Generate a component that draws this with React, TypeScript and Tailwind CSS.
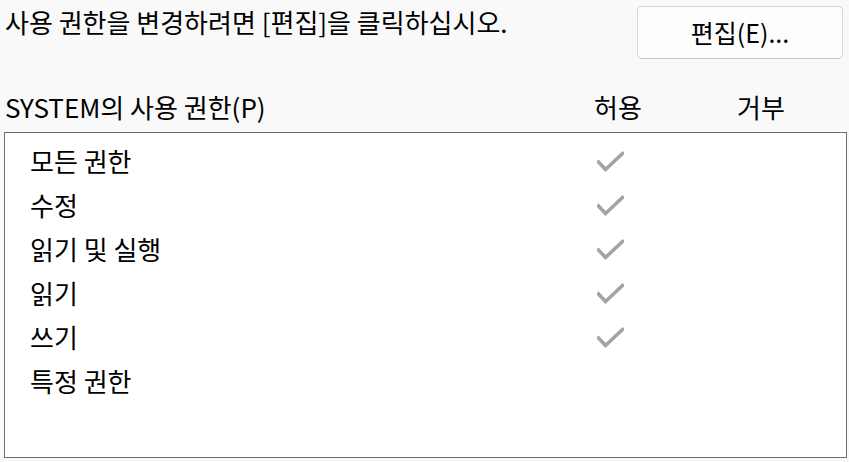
const rows = [
  { name: "모든 권한", allow: true },
  { name: "수정", allow: true },
  { name: "읽기 및 실행", allow: true },
  { name: "읽기", allow: true },
  { name: "쓰기", allow: true },
  { name: "특정 권한", allow: false },
];

function Check() {
  return (
    <svg width="27" height="21" viewBox="0 0 27 21" fill="none">
      <polyline
        points="1.5,11 8.5,18.5 25.5,2.5"
        stroke="#a3a3a3"
        strokeWidth="3.5"
        strokeLinecap="square"
        strokeLinejoin="miter"
      />
    </svg>
  );
}

export default function App() {
  return (
    <div
      className="w-[849px] h-[462px] bg-[#f9f9f9] text-black text-[26px] overflow-hidden"
      style={{ fontFamily: '"Noto Sans CJK KR", "Noto Sans", sans-serif' }}
    >
      <div className="flex items-start justify-between pl-[5px] pr-[6px] pt-[6px]">
        <p className="leading-[32px]">사용 권한을 변경하려면 [편집]을 클릭하십시오.</p>
        <button className="w-[206px] h-[53px] rounded-[5px] border border-[#d6d6d6] border-b-[#c4c4c4] bg-[#fdfdfd] text-[25px] leading-none">
          편집(E)...
        </button>
      </div>

      <div className="flex items-center pl-[5px] mt-[32px] h-[32px] leading-[32px]">
        <span className="w-[589px]">SYSTEM의 사용 권한(P)</span>
        <span className="w-[143px]">허용</span>
        <span>거부</span>
      </div>

      <div className="ml-[4px] mt-[9px] w-[843px] h-[326px] border border-[#6f6f6f] bg-white pt-[6px] pl-[25px]">
        {rows.map((r) => (
          <div key={r.name} className="flex items-center h-[44px]">
            <span className="w-[567px] leading-[32px]">{r.name}</span>
            {r.allow && <Check />}
          </div>
        ))}
      </div>
    </div>
  );
}
